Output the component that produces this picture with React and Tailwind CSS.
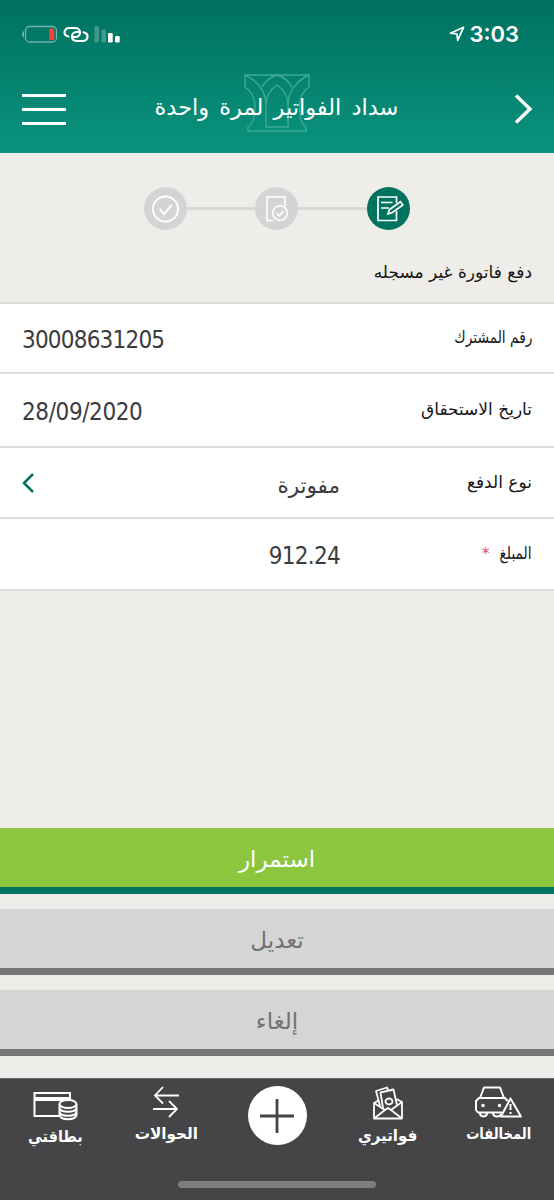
import React from "react";

const steps = [
  { id: "done", active: false, Icon: DoneIcon },
  { id: "review", active: false, Icon: ReviewIcon },
  { id: "form", active: true, Icon: FormIcon },
];

function StatusBar() {
  return (
    <div className="flex items-center justify-between h-[68px] pl-[21px] pr-[35px]">
      <div className="flex items-center">
        <svg width="101" height="20" viewBox="0 0 101 20" fill="none">
          <path d="M3 7C.5 7.500.5 13 3 13.500z" fill="#6fb5a8" />
          <rect x="4.5" y="2.5" width="31" height="15.500" rx="4" stroke="#6fb5a8" strokeWidth="1.3" />
          <rect x="28.300" y="4.600" width="5" height="11.500" rx="1.500" fill="#fb4237" />
          <path
            d="M47.500 12.500C45 12 43.500 10.500 43.500 8.300C43.500 5.800 45.500 4 48.500 4H53.500C57 4 59 6 59 8.500C59 11 57 13 54.500 13H52.500"
            stroke="#fff"
            strokeWidth="2.2"
            strokeLinecap="round"
          />
          <path
            d="M62.500 8.300C65 8.800 66.500 10.500 66.500 12.500C66.500 15 64.500 17 61.500 17H56.500C53 17 51 15 51 12.500C51 10 53 8 55.500 8H57"
            stroke="#fff"
            strokeWidth="2.2"
            strokeLinecap="round"
          />
          <rect x="73.500" y="2" width="4.500" height="16.500" rx="1.500" fill="#fff" fillOpacity=".25" />
          <rect x="80.500" y="5.500" width="4.500" height="13" rx="1.500" fill="#fff" fillOpacity=".25" />
          <rect x="87" y="9" width="4.700" height="9.500" rx="1.300" fill="#fff" />
          <rect x="94" y="12" width="4.700" height="6.500" rx="1.300" fill="#fff" />
        </svg>
      </div>
      <div className="flex items-center gap-[4px]">
        <svg width="16" height="16" viewBox="0 0 16 16" fill="none" stroke="#fff" strokeWidth="1.7" strokeLinejoin="round">
          <path d="M1.500 7.200L14.500 1.300L8.700 14.300L8 8z" />
        </svg>
        <span className="font-['Inter',sans-serif] text-[22px] font-semibold leading-none text-white">3:03</span>
      </div>
    </div>
  );
}

function Emblem() {
  return (
    <svg
      className="absolute left-[244px] top-[6px]"
      width="66"
      height="58"
      viewBox="0 0 66 58"
      fill="none"
      stroke="#3cab95"
      strokeWidth="1.4"
    >
      <path d="M1 1H65V13C57 18 55.500 26 55.500 34C55.500 43 57 50 62 53V57H4V53C9 50 11 43 11 34C11 26 9 18 1 13z" />
      <path d="M1 1C14 7 22 18 22 31V53H44V31C44 18 52 7 65 1" />
      <path d="M18 13C21 8 26 3 33 1C40 3 45 8 48 13" />
      <path d="M22 31C22 22 27 15 33 11C39 15 44 22 44 31" />
    </svg>
  );
}

function Header() {
  return (
    <header className="h-[153px] bg-gradient-to-b from-[#00715f] to-[#0a937e]">
      <StatusBar />
      <div className="relative flex h-[82px] items-center pl-[22px] pr-[21px]">
        <Emblem />
        <div className="flex w-[44px] flex-col gap-[11px]">
          <span className="h-[3px] bg-white" />
          <span className="h-[3px] bg-white" />
          <span className="h-[3px] bg-white" />
        </div>
        <h1
          dir="rtl"
          className="relative mr-[27px] flex-1 pb-[3px] text-center text-[22.5px] leading-none [word-spacing:3px] whitespace-nowrap text-white"
        >
          سداد الفواتير لمرة واحدة
        </h1>
        <svg width="19" height="30" viewBox="0 0 19 30" fill="none" stroke="#fff" strokeWidth="3.400">
          <path d="M2 1.500L16 15L2 28.500" />
        </svg>
      </div>
    </header>
  );
}

function DoneIcon() {
  return (
    <svg width="28" height="28" viewBox="0 0 28 28" fill="none" stroke="#fff" strokeWidth="1.9">
      <circle cx="14.500" cy="14" r="12.500" />
      <path d="M8.500 14L13 19L21 9.500" />
    </svg>
  );
}

function ReviewIcon() {
  return (
    <svg width="28" height="28" viewBox="0 0 28 28" fill="none" stroke="#fff" strokeWidth="1.6">
      <path d="M10 25.500H4V2H22V11" />
      <circle cx="17" cy="18" r="7.300" />
      <path d="M13.500 18L16.300 21L20.500 15.700" />
    </svg>
  );
}

function FormIcon() {
  return (
    <svg
      className="overflow-visible"
      width="28"
      height="28"
      viewBox="0 0 28 28"
      fill="none"
      stroke="#fff"
      strokeWidth="1.7"
    >
      <path d="M22.500 8V2H4V25.500H22.500V16" />
      <path d="M7 7.500H18.500M7 13H15" />
      <path d="M14 18.800L15.500 14.500L26.500 6.800L28.800 10L18 17.800z" />
    </svg>
  );
}

function Stepper() {
  return (
    <div className="flex items-center justify-center pt-[34px] pr-[1px]">
      {steps.map(({ id, active, Icon }, i) => (
        <React.Fragment key={id}>
          {i > 0 && <span className="h-[3px] w-[68.5px] bg-[#d8d8d7]" />}
          <span
            className={`flex size-[43px] items-center justify-center rounded-full ${
              active ? "bg-[#00735f]" : "bg-[#d4d4d4]"
            }`}
          >
            <Icon />
          </span>
        </React.Fragment>
      ))}
    </div>
  );
}

function Field({ label, height, arrow, value, short, narrow, required }) {
  return (
    <div className={`flex items-center border-b-2 border-[#dcdcdc] bg-white px-[22px] ${height}`}>
      {arrow && (
        <svg width="12" height="20" viewBox="0 0 12 20" fill="none" stroke="#00735f" strokeWidth="2.500">
          <path d="M11 1L2 10L11 19" />
        </svg>
      )}
      <div className={short ? "flex flex-1 justify-end pt-[4px]" : "flex flex-1 pt-[4px]"}>{value}</div>
      <div
        dir="rtl"
        className={`flex items-center text-[17px] leading-none whitespace-nowrap text-[#151515] ${short ? "w-[192px]" : ""}`}
      >
        <span className={narrow ? "origin-right scale-x-[.81] pb-px" : "pb-px"}>{label}</span>
        {required && <span className="mr-[3px] text-[15px] text-[#dd4f68]">*</span>}
      </div>
    </div>
  );
}

const numberText =
  "font-['DejaVu_Sans_Condensed','DejaVu_Sans',sans-serif] [font-stretch:condensed] text-[24px] leading-none text-[#3c3c3e]";

function ActionButton({ children, className }) {
  return (
    <button
      dir="rtl"
      className={`flex h-[66px] w-full items-center justify-center border-b-[7px] pt-[3px] text-[23px] leading-none ${className}`}
    >
      {children}
    </button>
  );
}

function CardIcon() {
  return (
    <svg width="46" height="30" viewBox="0 0 46 30" fill="none" stroke="#fff" strokeWidth="2">
      <path d="M38 9V2H2.500V25H27" />
      <path d="M2 8H38" strokeWidth="4" />
      <ellipse cx="36" cy="13" rx="8.500" ry="4" fill="#454547" />
      <path d="M27.500 13V24C28.500 29.500 43.500 29.500 44.500 24V13M27.500 17C28.500 22 43.500 22 44.500 17M27.500 21C28.500 26 43.500 26 44.500 21" />
    </svg>
  );
}

function TransferIcon() {
  return (
    <svg width="28" height="32" viewBox="0 0 28 32" fill="none" stroke="#fff" strokeWidth="1.8">
      <path d="M27 9.500H3M11 1L3 9.500L11 17.500" />
      <path d="M1 23H25M17 15L25 23L17 31" />
    </svg>
  );
}

function BillIcon() {
  return (
    <svg width="30" height="34" viewBox="0 0 30 34" fill="none" stroke="#fff" strokeWidth="1.8" strokeLinejoin="round">
      <path d="M5.500 14.500L1 17V32.500H29V16L23.500 13" />
      <path d="M1 17L12 24L1 32.500M29 16L18 24L29 32.500M12 24L15 22L18 24" />
      <path d="M7 20L3 5L14 1.500L15 4M10 22L7.500 6.500L20.500 3.500L24 19" />
      <ellipse cx="16" cy="15.500" rx="3.500" ry="3" />
    </svg>
  );
}

function CarIcon() {
  return (
    <svg width="47" height="32" viewBox="0 0 47 32" fill="none" stroke="#fff" strokeWidth="2" strokeLinejoin="round">
      <path d="M5 12L9 1.500H25L29 12M27 26.500H3L1 24V15L4 12H30L32.500 15" />
      <path d="M5 27C5 31.500 12 31.500 12 27M18 27C18 31.500 25 31.500 26 28" />
      <path d="M35.500 12.500L46 30.500H26z" />
      <path d="M35.500 18V24M35.500 26V28" />
      <circle cx="8" cy="19.500" r=".8" fill="#fff" />
      <circle cx="24.500" cy="19.500" r=".8" fill="#fff" />
    </svg>
  );
}

function NavItem({ icon, label, className, labelClass }) {
  return (
    <div className={`flex flex-col items-center text-white ${className}`}>
      {icon}
      <span dir="rtl" className={`mt-[5px] text-[16px] font-bold leading-[22px] whitespace-nowrap ${labelClass}`}>
        {label}
      </span>
    </div>
  );
}

function BottomNav() {
  return (
    <nav className="flex h-[122px] flex-col items-center border-t border-[#6a6a6c] bg-[#454547]">
      <div className="flex h-[102px] w-full items-start">
        <NavItem className="w-[110px] pt-[12px]" icon={<CardIcon />} label="بطاقتي" labelClass="scale-x-[.9]" />
        <NavItem className="w-[112px] pt-[7px]" icon={<TransferIcon />} label="الحوالات" labelClass="scale-x-[.95]" />
        <div className="flex w-[110px] justify-center pt-[7px]">
          <span className="flex size-[59px] items-center justify-center rounded-full bg-white">
            <svg width="34" height="34" viewBox="0 0 34 34" stroke="#454547" strokeWidth="2.800">
              <path d="M17 0V34M0 17H34" />
            </svg>
          </span>
        </div>
        <NavItem className="w-[111px] pt-[7px]" icon={<BillIcon />} label="فواتيري" labelClass="scale-x-[.94]" />
        <NavItem className="w-[111px] pt-[7px]" icon={<CarIcon />} label="المخالفات" labelClass="scale-x-[.82]" />
      </div>
      <span className="h-[7px] w-[198px] rounded-full bg-[#7e7e7e]" />
    </nav>
  );
}

export default function App() {
  return (
    <div className="flex h-[1200px] w-[554px] flex-col overflow-hidden bg-[#eeede9] font-['DejaVu_Sans',sans-serif]">
      <Header />
      <Stepper />
      <div className="flex h-[74px] items-center justify-end border-b-2 border-[#dcdcda] pt-[12px] pr-[22px]">
        <h2 dir="rtl" className="text-[17px] leading-none text-[#151515]">
          دفع فاتورة غير مسجله
        </h2>
      </div>

      <Field
        label="رقم المشترك"
        height="h-[70px]"
        narrow
        value={<span className={`${numberText} tracking-[-0.8px]`}>30008631205</span>}
      />
      <Field
        label="تاريخ الاستحقاق"
        height="h-[74px]"
        value={<span className={`${numberText} tracking-[-0.4px]`}>28/09/2020</span>}
      />
      <Field
        label="نوع الدفع"
        height="h-[71px]"
        arrow
        short
        value={
          <span dir="rtl" className="pt-[3px] text-[21.5px] leading-none text-[#3c3c3e]">
            مفوترة
          </span>
        }
      />
      <Field
        label="المبلغ"
        height="h-[72px]"
        short
        narrow
        required
        value={<span className={`${numberText} tracking-[-0.7px]`}>912.24</span>}
      />

      <div className="mt-auto flex flex-col gap-[15px] pb-[22px]">
        <ActionButton className="border-[#00725f] bg-[#8cc63f] text-white">استمرار</ActionButton>
        <ActionButton className="border-[#777575] bg-[#d5d5d5] text-[#737173]">تعديل</ActionButton>
        <ActionButton className="border-[#777575] bg-[#d5d5d5] text-[#737173]">إلغاء</ActionButton>
      </div>
      <BottomNav />
    </div>
  );
}
